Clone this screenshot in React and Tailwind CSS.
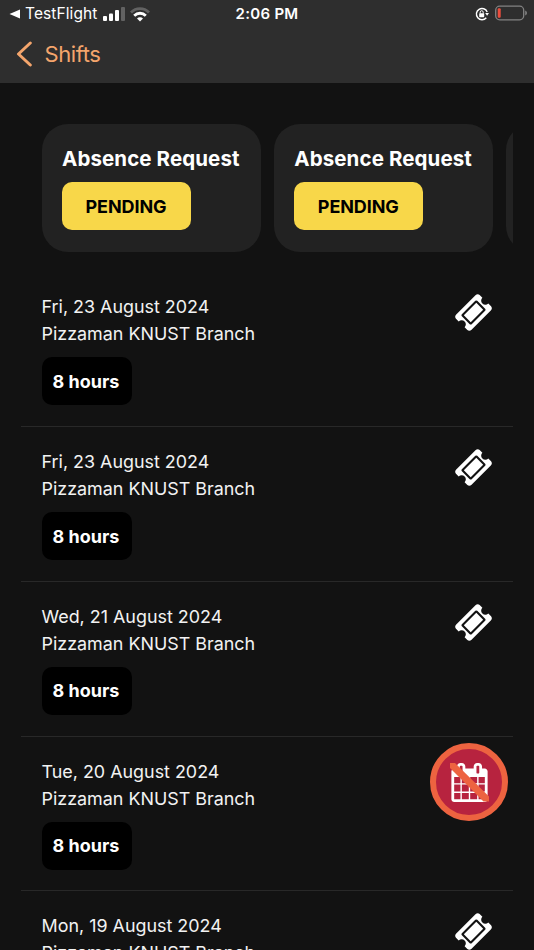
const requests = [
  { id: 1, title: 'Absence Request', status: 'PENDING' },
  { id: 2, title: 'Absence Request', status: 'PENDING' },
  { id: 3, title: '', status: '' },
];

const shifts = [
  { id: 1, date: 'Fri, 23 August 2024', branch: 'Pizzaman KNUST Branch', hours: 8 },
  { id: 2, date: 'Fri, 23 August 2024', branch: 'Pizzaman KNUST Branch', hours: 8 },
  { id: 3, date: 'Wed, 21 August 2024', branch: 'Pizzaman KNUST Branch', hours: 8 },
  { id: 4, date: 'Tue, 20 August 2024', branch: 'Pizzaman KNUST Branch', hours: 8, hideTicket: true },
  { id: 5, date: 'Mon, 19 August 2024', branch: 'Pizzaman KNUST Branch', hours: 8 },
];

function TicketIcon({ className }) {
  return (
    <svg viewBox="0 0 1792 1792" fill="currentColor" className={className}>
      <path d="M1024 452l316 316-572 572-316-316zm-211 979l618-618q19-19 19-45t-19-45l-362-362q-18-18-45-18t-45 18l-618 618q-19 19-19 45t19 45l362 362q18 18 45 18t45-18zm889-637l-907 908q-37 37-90.500 37t-90.500-37l-126-126q56-56 56-136t-56-136-136-56-136 56l-125-126q-37-37-37-90.500t37-90.500l907-906q37-37 90.500-37t90.500 37l125 125q-56 56-56 136t56 136 136 56 136-56l126 125q37 37 37 90.500t-37 90.500z" />
    </svg>
  );
}

function CalendarIcon({ className }) {
  return (
    <svg viewBox="0 0 1792 1792" fill="currentColor" className={className}>
      <path d="M192 1664h288v-288h-288v288zm352 0h320v-288h-320v288zm-352-352h288v-320h-288v320zm352 0h320v-320h-320v320zm-352-384h288v-288h-288v288zm736 736h320v-288h-320v288zm-384-736h320v-288h-320v288zm768 736h288v-288h-288v288zm-384-352h320v-320h-320v320zm-352-864v-288q0-13-9.500-22.500t-22.500-9.500h-64q-13 0-22.500 9.500t-9.500 22.500v288q0 13 9.500 22.500t22.500 9.500h64q13 0 22.500-9.500t9.500-22.500zm736 864h288v-320h-288v320zm-384-384h320v-288h-320v288zm384 0h288v-288h-288v288zm32-480v-288q0-13-9.500-22.500t-22.500-9.500h-64q-13 0-22.500 9.500t-9.500 22.500v288q0 13 9.500 22.500t22.500 9.500h64q13 0 22.500-9.500t9.500-22.500zm384-64v1280q0 52-38 90t-90 38h-1408q-52 0-90-38t-38-90v-1280q0-52 38-90t90-38h128v-96q0-66 47-113t113-47h64q66 0 113 47t47 113v96h384v-96q0-66 47-113t113-47h64q66 0 113 47t47 113v96h128q52 0 90 38t38 90z" />
    </svg>
  );
}

function StatusBar() {
  return (
    <div className="grid h-7 grid-cols-3 items-center text-white">
      <div className="flex items-center pl-[9px]">
        <svg viewBox="0 0 12 10" className="h-[10px] w-3" fill="currentColor">
          <path d="M0.500 5L11 0.500V9.500Z" />
        </svg>
        <span className="ml-1 text-[15.500px] leading-5 tracking-[0.100px] whitespace-nowrap">TestFlight</span>
        <svg viewBox="0 0 23 14" className="ml-[6px] h-[14px] w-[23px] shrink-0" fill="currentColor">
          <rect x="0" y="9" width="4" height="5" rx="1" />
          <rect x="6" y="6.500" width="4" height="7.500" rx="1" />
          <rect x="12" y="3" width="4" height="11" rx="1" />
          <rect x="18" y="0" width="4" height="14" rx="1" opacity="0.250" />
        </svg>
        <svg viewBox="0 0 20 15" className="ml-1 h-[15px] w-5 shrink-0" fill="none" stroke="currentColor">
          <path d="M1 5.400C6 0.300 14 0.300 19 5.400" strokeWidth="2.800" opacity="0.250" />
          <path d="M4.200 8.700C7.400 5.400 12.600 5.400 15.800 8.700" strokeWidth="2.800" />
          <path d="M10 14.500L7 11.500C8.600 9.900 11.400 9.900 13 11.500Z" fill="currentColor" stroke="none" />
        </svg>
      </div>
      <div className="text-center text-[15px] leading-5 font-semibold tracking-[0.300px]">2:06 PM</div>
      <div className="flex items-center justify-end pr-[7px]">
        {/* rotation lock */}
        <svg viewBox="0 0 14 14" className="h-[14px] w-[14px]" fill="none" stroke="currentColor">
          <path d="M12.200 5A5.600 5.600 0 1 0 11.300 10.700" strokeWidth="1.400" />
          <path d="M10.200 6H14L12.100 8.800Z" fill="currentColor" stroke="none" />
          <rect x="4.200" y="6.300" width="5" height="3.900" rx="0.600" fill="currentColor" stroke="none" />
          <path d="M5.200 6.500V5.200A1.500 1.500 0 0 1 8.200 5.200V6.500" strokeWidth="1" />
        </svg>
        <svg viewBox="0 0 32 16" className="mb-[1.500px] ml-[6px] h-4 w-8">
          <rect x="0.700" y="1.200" width="28" height="13.600" rx="4" fill="none" stroke="#828282" strokeWidth="1.300" />
          <rect x="2.700" y="3.200" width="3" height="9.600" rx="1" fill="#eb4d3d" />
          <path d="M30.200 5.500V10.500Q32 9.800 32 8T30.200 5.500Z" fill="#828282" />
        </svg>
      </div>
    </div>
  );
}

function Header() {
  return (
    <header className="h-[83px] shrink-0 bg-[#2e2e2e]">
      <StatusBar />
      <button className="flex h-[52px] items-center pl-4 text-[#f4a56c]">
        <svg viewBox="0 0 16 26" className="h-[26px] w-4" fill="none" stroke="currentColor" strokeWidth="3" strokeLinecap="round" strokeLinejoin="round">
          <path d="M14.300 2L2.500 13L14.300 24" />
        </svg>
        <span className="ml-[12.500px] text-[22px] leading-7 tracking-[-0.400px]">Shifts</span>
      </button>
    </header>
  );
}

function RequestCard({ request }) {
  return (
    <div className="h-[128px] w-[219.500px] shrink-0 rounded-[26px] bg-[#222222] px-[20.500px] pt-[21px]">
      <h2 className="h-7 text-[20.500px] leading-7 font-bold tracking-[0.100px] whitespace-nowrap text-white">{request.title}</h2>
      {request.status && (
        <div className="mt-[9px] flex h-12 w-[129px] items-center justify-center rounded-[10px] bg-[#f8d749] pr-[1px] text-[18px] font-bold tracking-[-0.100px] text-black">
          {request.status}
        </div>
      )}
    </div>
  );
}

function ShiftRow({ shift }) {
  return (
    <li className="flex h-[154.800px] shrink-0 items-start justify-between border-b border-[#282828] pt-[21px] pr-[20.500px] pl-[20.500px]">
      <div className="text-[17.900px] leading-[27px] text-[#f2f2f2]">
        <p>{shift.date}</p>
        <p>{shift.branch}</p>
        <div className="mt-[10px] flex h-12 w-[90px] items-center justify-center rounded-[10px] bg-black pr-[1px] text-[18px] font-bold text-white">
          {shift.hours} hours
        </div>
      </div>
      {!shift.hideTicket && <TicketIcon className="h-[39px] w-[39px] text-white" />}
    </li>
  );
}

export default function App() {
  return (
    <div className="relative flex h-[950px] w-[534px] flex-col overflow-hidden bg-[#121212] font-['Inter',sans-serif]">
      <Header />
      <main className="mx-[21px] flex min-h-0 flex-1 flex-col overflow-hidden">
        <section className="mt-[41px] flex shrink-0 gap-[12.800px] overflow-hidden pl-[20.500px]">
          {requests.map(request => (
            <RequestCard key={request.id} request={request} />
          ))}
        </section>
        <ul className="mt-[20.300px] flex flex-col">
          {shifts.map(shift => (
            <ShiftRow key={shift.id} shift={shift} />
          ))}
        </ul>
      </main>

      {/* Floating button over the list */}
      <button className="absolute right-[26px] bottom-[129px] flex h-[78px] w-[78px] items-center justify-center rounded-full border-[6px] border-[#ed6340] bg-[#b7233f] text-white">
        <CalendarIcon className="h-[39px] w-[39px]" />
        <svg viewBox="0 0 40 40" className="absolute h-10 w-10" fill="#ed6340">
          <path d="M1 1H6L40 34.500V39.500H34.500L1 6Z" />
        </svg>
      </button>
    </div>
  );
}
